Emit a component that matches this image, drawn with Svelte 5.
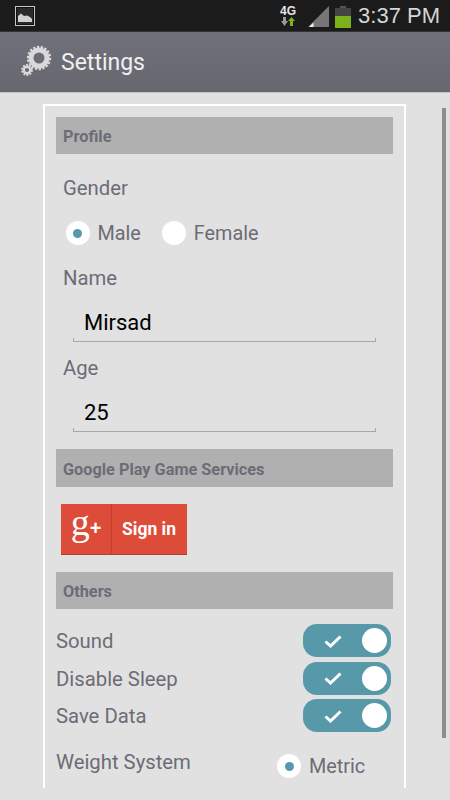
<script>
    let toggles = ['Sound', 'Disable Sleep', 'Save Data'];
</script>

<div class="screen">
    <div class="status">
        <svg class="pic" width="20" height="20" viewBox="0 0 20 20">
            <rect x="0.5" y="0.5" width="19" height="19" fill="#2a2a2a" stroke="#c4c4c4"/>
            <rect x="1.5" y="1.5" width="17" height="17" fill="none" stroke="#111"/>
            <path d="M3 16 V10 L6 7.5 L9 10 L12 9.5 L15 11 L17 13 V16 Z" fill="#d0d0d0"/>
        </svg>
        <div class="status__right">
            <div class="net">
                <span class="net__label">4G</span>
                <svg width="16" height="9" viewBox="0 0 16 9">
                    <path d="M3 0 H6 V4 H8 L4.500 9 L1 4 H3 Z" fill="#9a9a9a"/>
                    <path d="M10 9 H13 V4 H15 L11.500 0 L8 4 H10 Z" fill="#7fb21c"/>
                </svg>
            </div>
            <svg class="signal" width="21" height="21" viewBox="0 0 21 21">
                <path d="M0 21 L21 0 V21 Z" fill="#777"/>
                <path d="M1 21 L5.500 16.500 V21 Z" fill="#f2f2f2"/>
            </svg>
            <svg class="battery" width="16" height="22" viewBox="0 0 16 22">
                <rect x="5" y="0" width="6" height="2" fill="#555"/>
                <rect x="0" y="2" width="16" height="8" fill="#444"/>
                <rect x="0" y="10" width="16" height="12" fill="#7cb11c"/>
            </svg>
            <span class="clock">3:37 PM</span>
        </div>
    </div>

    <div class="bar">
        <svg class="gear" width="36" height="36" viewBox="0 0 36 36">
            <circle cx="20" cy="14" r="8" fill="none" stroke="#d9d9dc" stroke-width="5"/>
            <circle cx="20" cy="14" r="11" fill="none" stroke="#d9d9dc" stroke-width="2.400" stroke-dasharray="2.300 1.500"/>
            <circle cx="8" cy="26" r="3.300" fill="none" stroke="#d9d9dc" stroke-width="2.400"/>
            <circle cx="8" cy="26" r="5" fill="none" stroke="#d9d9dc" stroke-width="1.800" stroke-dasharray="1.900 1.240"/>
        </svg>
        <span class="bar__title">Settings</span>
    </div>

    <div class="body">
        <div class="card">
            <div class="header">Profile</div>
            <div class="label gender">Gender</div>
            <div class="radios">
                <span class="radio on"></span>
                <span class="radio__text">Male</span>
                <span class="radio"></span>
                <span class="radio__text">Female</span>
            </div>
            <div class="label name">Name</div>
            <div class="field">Mirsad</div>
            <div class="label age">Age</div>
            <div class="field">25</div>

            <div class="header play">Google Play Game Services</div>
            <div class="gplus">
                <span class="gplus__logo"><span class="g">g</span><span class="plus">+</span></span>
                <span class="gplus__text">Sign in</span>
            </div>

            <div class="header others">Others</div>
            <div class="toggles">
                {#each toggles as name}
                    <div class="row">
                        <span class="row__label">{name}</span>
                        <div class="toggle">
                            <svg width="18" height="14" viewBox="0 0 18 14">
                                <path d="M1.500 7.500 L6.500 12 L16.500 2.500" fill="none" stroke="#fff" stroke-width="3"/>
                            </svg>
                            <span class="toggle__knob"></span>
                        </div>
                    </div>
                {/each}
            </div>
            <div class="weight">
                <span class="weight__label">Weight System</span>
                <div class="weight__option">
                    <span class="radio on"></span>
                    <span class="radio__text">Metric</span>
                </div>
            </div>
        </div>
        <div class="scrollbar"></div>
    </div>
</div>

<style>
    :global(body) {
        margin: 0;
        font-family: Roboto, sans-serif;
    }
    .screen {
        width: 450px;
        height: 800px;
        overflow: hidden;
        background: #e1e1e1;
        display: flex;
        flex-direction: column;
    }
    .status {
        height: 31px;
        flex: none;
        background: #1b1b1b;
        display: flex;
        align-items: center;
        justify-content: space-between;
        padding: 0 10px 0 15px;
        border-bottom: 1px solid #333;
    }
    .status__right {
        display: flex;
        align-items: center;
    }
    .net {
        display: flex;
        flex-direction: column;
        align-items: center;
        width: 18px;
        margin-right: 11px;
    }
    .net__label {
        font: bold 12px/12px "Liberation Sans", sans-serif;
        color: #e4e4e4;
    }
    .signal {
        margin-right: 6px;
        margin-top: 2px;
    }
    .battery {
        margin-right: 7px;
        margin-top: 2px;
    }
    .clock {
        font: 22px/26px "Liberation Sans", sans-serif;
        color: #d6d6d6;
    }
    .bar {
        height: 60px;
        flex: none;
        background: linear-gradient(#70707a, #676770);
        border-bottom: 1px solid #c4c4c4;
        display: flex;
        align-items: center;
        padding-left: 19px;
    }
    .bar__title {
        font-size: 23px;
        color: #f0f0f0;
        margin-left: 6px;
    }
    .body {
        position: relative;
        flex: 1;
        min-height: 0;
        padding: 11px 0 0 43px;
    }
    .card {
        width: 337px;
        height: 671px;
        padding: 11px 11px 0;
        border: solid #fff;
        border-width: 2px 2px 0;
    }
    .header {
        height: 37px;
        line-height: 40px;
        padding-left: 7px;
        background: #b0b0b0;
        font-size: 16.300px;
        font-weight: 700;
        color: #6c6c76;
    }
    .label {
        font-size: 20.300px;
        line-height: 24px;
        color: #6c6c76;
        padding-left: 7px;
    }
    .gender {
        margin-top: 22px;
    }
    .radios {
        display: flex;
        align-items: center;
        margin: 21px 0 0 9.500px;
    }
    .radio {
        width: 24px;
        height: 24px;
        flex: none;
        border-radius: 50%;
        background: #fff;
        display: flex;
        align-items: center;
        justify-content: center;
    }
    .radio.on::after {
        content: '';
        width: 9px;
        height: 9px;
        border-radius: 50%;
        background: #5899a9;
    }
    .radio__text {
        height: 24px;
        font-size: 19.800px;
        line-height: 26px;
        color: #6c6c76;
        margin: 0 21px 0 8px;
    }
    .name {
        margin-top: 21px;
    }
    .age {
        margin-top: 14px;
    }
    .field {
        margin: 16px 17px 0;
        height: 35px;
        padding-left: 10px;
        font-size: 22px;
        line-height: 34px;
        color: #000;
        border: solid #a8a8a8;
        border-width: 0 1px 1px;
        border-image: linear-gradient(transparent 32px, #a8a8a8 32px) 1;
    }
    .play {
        height: 38px;
        line-height: 42px;
        margin-top: 17px;
    }
    .gplus {
        width: 126px;
        height: 50px;
        margin: 17px 0 0 5px;
        background: #dd4b39;
        display: flex;
        align-items: center;
        color: #fff;
        box-shadow: 0 1px 0 #b93c2c;
    }
    .gplus__logo {
        width: 50px;
        height: 50px;
        flex: none;
        border-right: 1px solid #c23f2f;
        display: flex;
        align-items: center;
        justify-content: center;
    }
    .g {
        font: 38px/38px "Liberation Serif", serif;
        margin-top: -14px;
    }
    .plus {
        font: bold 20px/20px "Liberation Sans", sans-serif;
        margin-top: -3px;
    }
    .gplus__text {
        font-size: 17.500px;
        font-weight: 700;
        margin-left: 10px;
    }
    .others {
        margin-top: 18px;
    }
    .toggles {
        display: flex;
        flex-direction: column;
        gap: 4.500px;
        margin-top: 15px;
    }
    .row {
        display: flex;
        align-items: center;
        justify-content: space-between;
        padding-right: 2px;
    }
    .row__label {
        font-size: 20.300px;
        color: #6c6c76;
        margin-top: 1px;
    }
    .toggle {
        width: 88px;
        height: 33px;
        border-radius: 14px;
        background: #5899a9;
        display: flex;
        align-items: center;
        justify-content: flex-end;
        gap: 20px;
        padding-right: 4px;
        box-sizing: border-box;
    }
    .toggle__knob {
        width: 25px;
        height: 25px;
        border-radius: 50%;
        background: #fff;
    }
    .weight {
        display: flex;
        justify-content: space-between;
        margin-top: 16px;
    }
    .weight__label {
        font-size: 20.300px;
        line-height: 28px;
        color: #6c6c76;
    }
    .weight__option {
        display: flex;
        align-items: center;
        margin-top: 6px;
        width: 116px;
    }
    .scrollbar {
        position: absolute;
        left: 442px;
        top: 15px;
        width: 4px;
        height: 630px;
        background: #8e8e8e;
    }
</style>
